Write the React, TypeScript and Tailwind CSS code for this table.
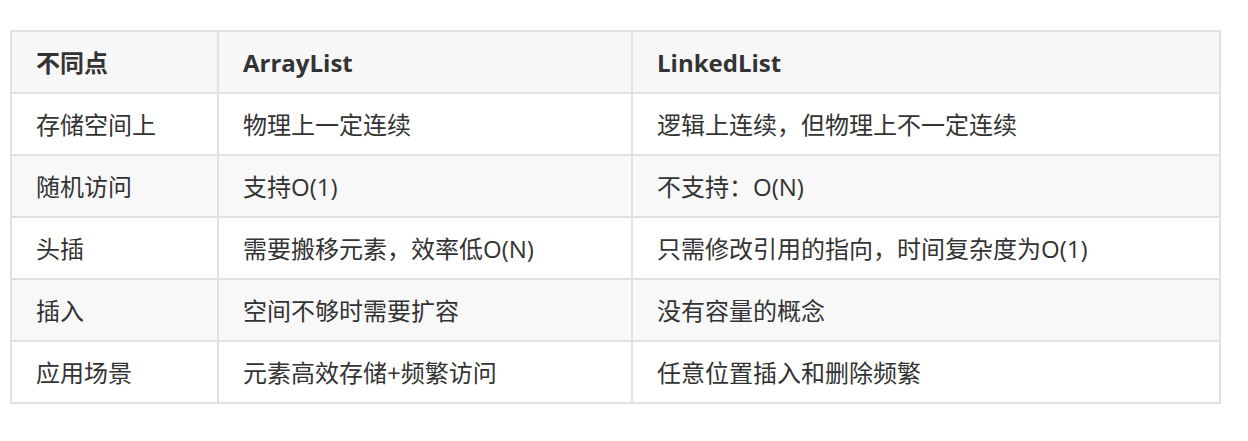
const rows: [string, string, string][] = [
  ['存储空间上', '物理上一定连续', '逻辑上连续，但物理上不一定连续'],
  ['随机访问', '支持O(1)', '不支持：O(N)'],
  ['头插', '需要搬移元素，效率低O(N)', '只需修改引用的指向，时间复杂度为O(1)'],
  ['插入', '空间不够时需要扩容', '没有容量的概念'],
  ['应用场景', '元素高效存储+频繁访问', '任意位置插入和删除频繁'],
];

const font = { fontFamily: '"Open Sans", "Noto Sans CJK SC", sans-serif' };

function Cell({ children, bold }: { children: string; bold?: boolean }) {
  return (
    <div
      className={`flex h-[62px] items-center border-r-2 border-b-2 border-[#dfe2e5] pl-6 pt-[2px] text-[24px] text-[#333] ${
        bold ? 'font-bold' : ''
      }`}
    >
      {children}
    </div>
  );
}

export default function App() {
  return (
    <div className="h-[441px] w-[1248px] bg-white pt-[30px] pl-[10px]" style={font}>
      <div className="grid w-[1211px] grid-cols-[207px_414px_588px] border-t-2 border-l-2 border-[#dfe2e5]">
        <div className="contents bg-[#f7f7f7]">
          <div className="bg-[#f7f7f7]">
            <Cell bold>不同点</Cell>
          </div>
          <div className="bg-[#f7f7f7]">
            <Cell bold>ArrayList</Cell>
          </div>
          <div className="bg-[#f7f7f7]">
            <Cell bold>LinkedList</Cell>
          </div>
        </div>
        {rows.map((row, i) =>
          row.map((text, j) => (
            <div key={`${i}-${j}`} className={i % 2 === 1 ? 'bg-[#f8f8f8]' : 'bg-white'}>
              <Cell>{text}</Cell>
            </div>
          )),
        )}
      </div>
    </div>
  );
}
